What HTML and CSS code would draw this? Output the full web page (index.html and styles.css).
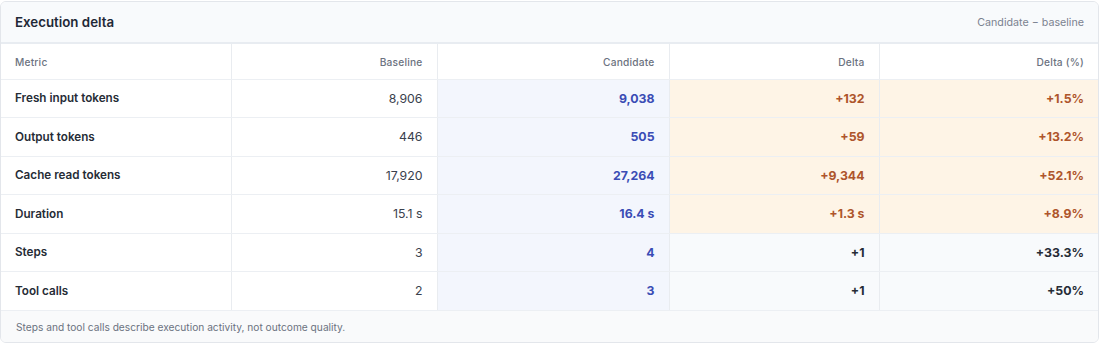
FILE: index.html
```html
<!DOCTYPE html>
<html lang="en">
<head>
<meta charset="utf-8">
<title>Execution delta</title>
<link rel="stylesheet" href="styles.css">
</head>
<body>
<section class="card">
  <header class="card-head">
    <h2 class="title">Execution delta</h2>
    <span class="subtitle">Candidate − baseline</span>
  </header>
  <table class="grid">
    <colgroup>
      <col class="c-metric">
      <col class="c-base">
      <col class="c-cand">
      <col class="c-delta">
      <col class="c-pct">
    </colgroup>
    <thead>
      <tr>
        <th class="left">Metric</th>
        <th>Baseline</th>
        <th>Candidate</th>
        <th>Delta</th>
        <th>Delta (%)</th>
      </tr>
    </thead>
    <tbody>
      <tr class="up">
        <td class="metric">Fresh input tokens</td>
        <td class="base">8,906</td>
        <td class="cand">9,038</td>
        <td class="delta">+132</td>
        <td class="delta">+1.5%</td>
      </tr>
      <tr class="up">
        <td class="metric">Output tokens</td>
        <td class="base">446</td>
        <td class="cand">505</td>
        <td class="delta">+59</td>
        <td class="delta">+13.2%</td>
      </tr>
      <tr class="up">
        <td class="metric">Cache read tokens</td>
        <td class="base">17,920</td>
        <td class="cand">27,264</td>
        <td class="delta">+9,344</td>
        <td class="delta">+52.1%</td>
      </tr>
      <tr class="up">
        <td class="metric">Duration</td>
        <td class="base">15.1 s</td>
        <td class="cand">16.4 s</td>
        <td class="delta">+1.3 s</td>
        <td class="delta">+8.9%</td>
      </tr>
      <tr class="neutral">
        <td class="metric">Steps</td>
        <td class="base">3</td>
        <td class="cand">4</td>
        <td class="delta">+1</td>
        <td class="delta">+33.3%</td>
      </tr>
      <tr class="neutral">
        <td class="metric">Tool calls</td>
        <td class="base">2</td>
        <td class="cand">3</td>
        <td class="delta">+1</td>
        <td class="delta">+50%</td>
      </tr>
    </tbody>
  </table>
  <footer class="card-foot">Steps and tool calls describe execution activity, not outcome quality.</footer>
</section>
</body>
</html>
```

FILE: styles.css
```css
* { box-sizing: border-box; }
html, body { margin: 0; padding: 0; background: #ffffff; }
body {
  font-family: Inter, "Noto Sans", "Liberation Sans", sans-serif;
  color: #1f2937;
  padding: 1px 1px 0 0;
}
.card {
  border: 1px solid #e3e6eb;
  border-radius: 6px;
  overflow: hidden;
  background: #ffffff;
  height: 342px;
  display: flex;
  flex-direction: column;
}
.card-head {
  height: 42px;
  flex: none;
  background: #f8fafc;
  border-bottom: 2px solid #e8ecf1;
  display: flex;
  align-items: center;
  justify-content: space-between;
  padding: 0 14px 0 14px;
}
.title {
  margin: 0;
  font-size: 13.3px;
  font-weight: 600;
  color: #1f2937;
}
.subtitle {
  font-size: 10.7px;
  color: #7b8290;
}
.grid {
  width: 100%;
  border-collapse: collapse;
  table-layout: fixed;
  flex: none;
}
.c-metric { width: 230px; }
.c-base { width: 206px; }
.c-cand { width: 232px; }
.c-delta { width: 210px; }
.c-pct { width: auto; }
.grid th, .grid td {
  border-right: 1px solid #e9ecf0;
  border-bottom: 1px solid #eceff3;
  text-align: right;
  padding: 0 14px 0 14px;
  white-space: nowrap;
}
.grid th:last-child, .grid td:last-child { border-right: none; }
.grid th {
  height: 35px;
  font-size: 10.2px;
  font-weight: 500;
  color: #6b7280;
  letter-spacing: 0.2px;
  padding-top: 1px;
}
.grid th.left { text-align: left; }
.grid td {
  height: 38.5px;
  font-size: 12.3px;
  padding-bottom: 0;
}
.metric {
  text-align: left !important;
  font-weight: 600;
  font-size: 11.7px !important;
  color: #262c36;
}
.base {
  color: #3a414d;
  font-weight: 400;
}
.cand {
  background: #f3f6fd;
  color: #3a4cb5;
  font-weight: 700;
}
.delta { font-weight: 700; }
.up .delta {
  background: #fef4e6;
  color: #ae552b;
}
.neutral .delta {
  background: #f8fafc;
  color: #262c36;
}
.card-foot {
  flex: 1;
  background: #f9fafb;
  font-size: 10.2px;
  color: #6b7280;
  padding: 1px 15px 0;
  display: flex;
  align-items: center;
}
```
